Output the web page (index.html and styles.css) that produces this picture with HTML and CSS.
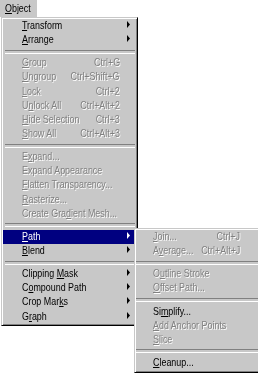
FILE: index.html
```html
<!DOCTYPE html>
<html>
<head>
<meta charset="utf-8">
<link rel="stylesheet" href="styles.css">
</head>
<body>
<div class="menubar"><span class="title"><span class="txt"><u>O</u>bject</span></span></div>

<div class="menu main">
  <div class="item"><span class="label"><u>T</u>ransform</span><span class="arrow"><svg width="3" height="7" viewBox="0 0 3 7"><path d="M0 0L3 3.5L0 7Z"/></svg></span></div>
  <div class="item"><span class="label"><u>A</u>rrange</span><span class="arrow"><svg width="3" height="7" viewBox="0 0 3 7"><path d="M0 0L3 3.5L0 7Z"/></svg></span></div>
  <div class="sep"></div>
  <div class="item dis"><span class="label"><u>G</u>roup</span><span class="key">Ctrl+G</span></div>
  <div class="item dis"><span class="label"><u>U</u>ngroup</span><span class="key">Ctrl+Shift+G</span></div>
  <div class="item dis"><span class="label"><u>L</u>ock</span><span class="key">Ctrl+2</span></div>
  <div class="item dis"><span class="label">U<u>n</u>lock All</span><span class="key">Ctrl+Alt+2</span></div>
  <div class="item dis"><span class="label"><u>H</u>ide Selection</span><span class="key">Ctrl+3</span></div>
  <div class="item dis"><span class="label"><u>S</u>how All</span><span class="key">Ctrl+Alt+3</span></div>
  <div class="sep"></div>
  <div class="item dis"><span class="label">E<u>x</u>pand...</span></div>
  <div class="item dis"><span class="label">Expand Appearance</span></div>
  <div class="item dis"><span class="label"><u>F</u>latten Transparency...</span></div>
  <div class="item dis"><span class="label"><u>R</u>asterize...</span></div>
  <div class="item dis"><span class="label">Create Gra<u>d</u>ient Mesh...</span></div>
  <div class="sep"></div>
  <div class="item hi"><span class="label"><u>P</u>ath</span><span class="arrow"><svg width="3" height="7" viewBox="0 0 3 7"><path d="M0 0L3 3.5L0 7Z"/></svg></span></div>
  <div class="item"><span class="label"><u>B</u>lend</span><span class="arrow"><svg width="3" height="7" viewBox="0 0 3 7"><path d="M0 0L3 3.5L0 7Z"/></svg></span></div>
  <div class="sep"></div>
  <div class="item"><span class="label">Clipping <u>M</u>ask</span><span class="arrow"><svg width="3" height="7" viewBox="0 0 3 7"><path d="M0 0L3 3.5L0 7Z"/></svg></span></div>
  <div class="item"><span class="label">C<u>o</u>mpound Path</span><span class="arrow"><svg width="3" height="7" viewBox="0 0 3 7"><path d="M0 0L3 3.5L0 7Z"/></svg></span></div>
  <div class="item"><span class="label">Crop Mar<u>k</u>s</span><span class="arrow"><svg width="3" height="7" viewBox="0 0 3 7"><path d="M0 0L3 3.5L0 7Z"/></svg></span></div>
  <div class="item"><span class="label">G<u>r</u>aph</span><span class="arrow"><svg width="3" height="7" viewBox="0 0 3 7"><path d="M0 0L3 3.5L0 7Z"/></svg></span></div>
</div>

<div class="menu sub">
  <div class="item dis"><span class="label"><u>J</u>oin...</span><span class="key">Ctrl+J</span></div>
  <div class="item dis"><span class="label">A<u>v</u>erage...</span><span class="key">Ctrl+Alt+J</span></div>
  <div class="sep"></div>
  <div class="item dis"><span class="label">O<u>u</u>tline Stroke</span></div>
  <div class="item dis"><span class="label"><u>O</u>ffset Path...</span></div>
  <div class="sep"></div>
  <div class="item"><span class="label">Si<u>m</u>plify...</span></div>
  <div class="item dis"><span class="label"><u>A</u>dd Anchor Points</span></div>
  <div class="item dis"><span class="label"><u>S</u>lice</span></div>
  <div class="sep"></div>
  <div class="item"><span class="label"><u>C</u>leanup...</span></div>
</div>
</body>
</html>
```

FILE: styles.css
```css
* { box-sizing: border-box; }
html, body { margin: 0; padding: 0; }
body {
  width: 258px;
  height: 373px;
  overflow: hidden;
  position: relative;
  background: #fff;
  color: #000;
  font-family: "Liberation Sans", Arial, sans-serif;
  font-size: 11px;
}
u { text-decoration: underline; text-underline-offset: 1px; }

.menubar { height: 17px; display: flex; }
.title {
  background: #c8c8c8;
  width: 37px;
  padding-left: 5px;
  line-height: 17px;
  white-space: nowrap;
}
.txt { display: inline-block; transform: scaleX(0.81); transform-origin: left center; }

.menu {
  position: absolute;
  background: #c8c8c8;
  border: 1px solid;
  border-color: #c8c8c8 #000 #000 #c8c8c8;
  box-shadow: inset 1px 1px 0 #fff, inset -1px -1px 0 #808080;
  padding: 1px;
  overflow: hidden;
}
.main { left: 1px; top: 17px; width: 137px; height: 309px; }
.sub { left: 134px; top: 228px; width: 128px; height: 145px; }

.item {
  display: grid;
  grid-template-columns: minmax(0, 1fr) auto 16px;
  height: 14.15px;
  line-height: 12.15px;
  padding: 0 0 2px 19px;
  white-space: nowrap;
}
.sub .item { padding-left: 17px; grid-template-columns: minmax(0, 1fr) auto 20px; }
.label {
  grid-column: 1;
  justify-self: start;
  transform: scaleX(0.81);
  transform-origin: left center;
}
.key {
  grid-column: 2;
  text-align: right;
  transform: scaleX(0.81);
  transform-origin: right center;
}
.arrow {
  grid-column: 3;
  display: flex;
  align-items: center;
  padding-left: 7px;
  margin-top: -1px;
}
.arrow svg { display: block; fill: currentColor; }

.sep {
  height: 9px;
  display: flex;
  align-items: center;
  margin: 0 1px 0 2px;
}
.sub .sep { margin: 0; }
.sep::before {
  content: "";
  flex: 1;
  height: 2px;
  border-top: 1px solid #808080;
  border-bottom: 1px solid #fff;
}

.dis { color: #808080; text-shadow: 1px 1px 0 #fff; }
.hi { background: #000080; color: #fff; }
```
